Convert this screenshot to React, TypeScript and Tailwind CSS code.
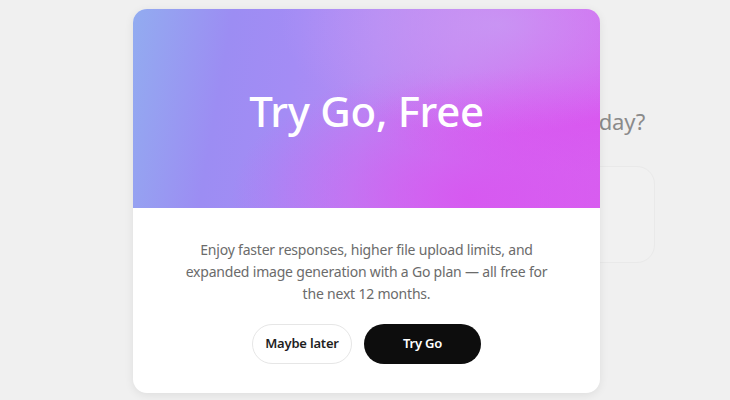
export default function App() {
  return (
    <main
      className="relative w-[730px] h-[400px] overflow-hidden bg-[#f0f0f0]"
      style={{ fontFamily: '"Noto Sans", "Open Sans", sans-serif' }}
    >
      {/* page behind the dialog */}
      <div className="flex flex-col items-end pr-[85px] pt-[106px]">
        <h2 className="text-[22px] leading-[30px] tracking-[-0.2px] text-[#8a8a8a]">
          What can I help with today?
        </h2>
        <div className="mt-[30px] mr-[-10px] h-[97px] w-[420px] rounded-[18px] border border-[#e9e9e9] bg-[#f1f1f1]" />
      </div>

      {/* dialog */}
      <div className="absolute inset-0 flex justify-center pt-[9px] pl-[3px]">
        <section className="w-[467px] h-[384px] overflow-hidden rounded-[14px] bg-white shadow-[0_2px_10px_rgba(0,0,0,0.08)]">
          <header className="flex h-[199px] items-center justify-center bg-[radial-gradient(ellipse_at_78%_8%,rgba(200,158,244,0.75),transparent_42%),radial-gradient(ellipse_at_72%_95%,rgba(216,84,240,0.85),transparent_50%),radial-gradient(ellipse_at_98%_55%,rgba(217,88,240,0.9),transparent_35%),linear-gradient(100deg,#92acf0_0%,#9c8df3_20%,#a48cf5_34%,#b58bf4_50%,#c67ff2_66%,#d46af1_82%,#d862f0_100%)]">
            <h1 className="mt-[4px] text-[42px] font-medium leading-none tracking-[-0.3px] text-white">
              Try Go, Free
            </h1>
          </header>
          <div className="flex flex-col items-center pt-[31px]">
            <p className="text-center text-[14px] leading-[22px] tracking-[-0.2px] text-[#6b6b6b]">
              Enjoy faster responses, higher file upload limits, and
              <br />
              expanded image generation with a Go plan — all free for
              <br />
              the next 12 months.
            </p>
            <div className="mt-[19px] flex gap-[12px]">
              <button className="h-[40px] w-[100px] rounded-full border border-[#e6e6e6] bg-white text-[13px] font-semibold tracking-[-0.2px] text-[#1f1f1f]">
                Maybe later
              </button>
              <button className="h-[40px] w-[117px] rounded-full bg-[#0d0d0d] text-[13px] font-semibold tracking-[-0.2px] text-white">
                Try Go
              </button>
            </div>
          </div>
        </section>
      </div>
    </main>
  );
}
